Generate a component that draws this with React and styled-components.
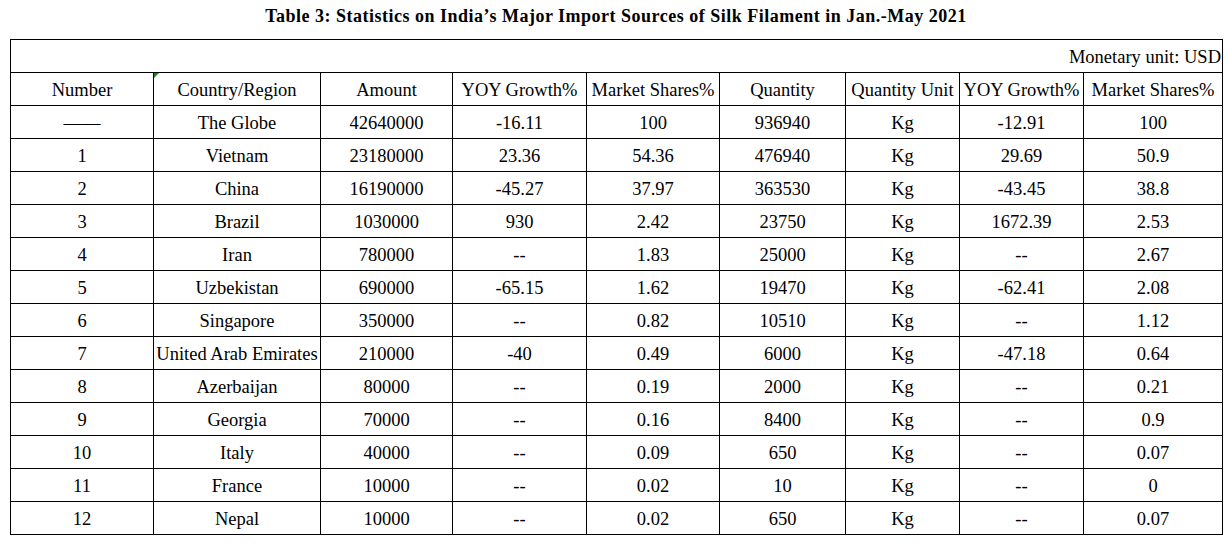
import React from 'react';
import styled, { createGlobalStyle } from 'styled-components';

const GlobalStyle = createGlobalStyle`
  html, body {
    margin: 0;
    padding: 0;
    background: #fff;
  }
  body {
    font-family: "Liberation Serif", "Times New Roman", serif;
    color: #000;
  }
`;

const Page = styled.div`
  width: 1225px;
  padding: 0 0 0 10px;
  box-sizing: border-box;
`;

const Title = styled.h1`
  margin: 0;
  padding-top: 5px;
  height: 39px;
  box-sizing: border-box;
  font-size: 18px;
  line-height: 22px;
  font-weight: bold;
  letter-spacing: 0.5px;
  text-align: center;
  width: 1212px;
`;

const Table = styled.table`
  border-collapse: collapse;
  table-layout: fixed;
  width: 1212px;
  font-size: 18.5px;
`;

const Cell = styled.td`
  position: relative;
  border: 1px solid #000;
  height: 33px;
  padding: 2px 1px 0;
  text-align: ${(p) => p.$align || 'center'};
  vertical-align: middle;
  white-space: nowrap;
  line-height: 20px;
  box-sizing: border-box;
`;

const UnitCell = styled(Cell)`
  padding-right: 1px;
`;

const CommentMark = styled.span`
  position: absolute;
  left: 0;
  top: 0;
  width: 0;
  height: 0;
  border-top: 5px solid #1e8a1e;
  border-right: 5px solid transparent;
`;

const widths = [143, 167, 132, 134, 133, 126, 114, 124, 139];

const headers = [
  'Number',
  'Country/Region',
  'Amount',
  'YOY Growth%',
  'Market Shares%',
  'Quantity',
  'Quantity Unit',
  'YOY Growth%',
  'Market Shares%',
];

const rows = [
  ['——', 'The Globe', '42640000', '-16.11', '100', '936940', 'Kg', '-12.91', '100'],
  ['1', 'Vietnam', '23180000', '23.36', '54.36', '476940', 'Kg', '29.69', '50.9'],
  ['2', 'China', '16190000', '-45.27', '37.97', '363530', 'Kg', '-43.45', '38.8'],
  ['3', 'Brazil', '1030000', '930', '2.42', '23750', 'Kg', '1672.39', '2.53'],
  ['4', 'Iran', '780000', '--', '1.83', '25000', 'Kg', '--', '2.67'],
  ['5', 'Uzbekistan', '690000', '-65.15', '1.62', '19470', 'Kg', '-62.41', '2.08'],
  ['6', 'Singapore', '350000', '--', '0.82', '10510', 'Kg', '--', '1.12'],
  ['7', 'United Arab Emirates', '210000', '-40', '0.49', '6000', 'Kg', '-47.18', '0.64'],
  ['8', 'Azerbaijan', '80000', '--', '0.19', '2000', 'Kg', '--', '0.21'],
  ['9', 'Georgia', '70000', '--', '0.16', '8400', 'Kg', '--', '0.9'],
  ['10', 'Italy', '40000', '--', '0.09', '650', 'Kg', '--', '0.07'],
  ['11', 'France', '10000', '--', '0.02', '10', 'Kg', '--', '0'],
  ['12', 'Nepal', '10000', '--', '0.02', '650', 'Kg', '--', '0.07'],
];

export default function App() {
  return (
    <Page>
      <GlobalStyle />
      <Title>Table 3: Statistics on India’s Major Import Sources of Silk Filament in Jan.-May 2021</Title>
      <Table>
        <colgroup>
          {widths.map((w, i) => (
            <col key={i} style={{ width: w }} />
          ))}
        </colgroup>
        <tbody>
          <tr>
            <UnitCell colSpan={9} $align="right">Monetary unit: USD</UnitCell>
          </tr>
          <tr>
            {headers.map((h, i) => (
              <Cell key={i}>
                {i === 1 && <CommentMark />}
                {h}
              </Cell>
            ))}
          </tr>
          {rows.map((r, ri) => (
            <tr key={ri}>
              {r.map((v, ci) => (
                <Cell key={ci}>{v}</Cell>
              ))}
            </tr>
          ))}
        </tbody>
      </Table>
    </Page>
  );
}
